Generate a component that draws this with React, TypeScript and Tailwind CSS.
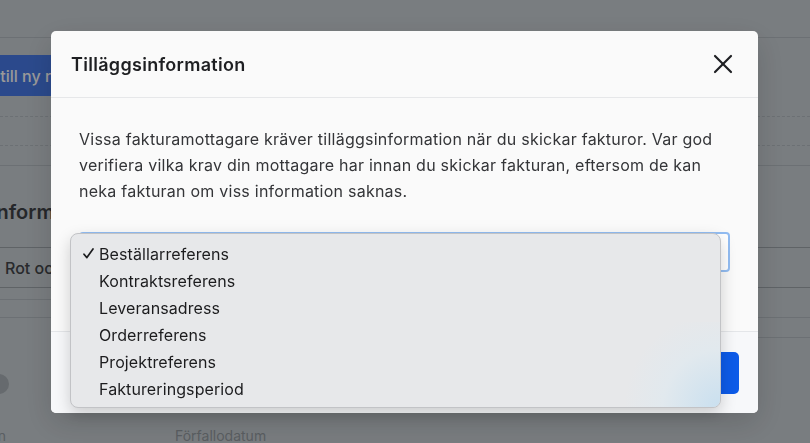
import { X } from 'lucide-react'

const options = [
  'Beställarreferens',
  'Kontraktsreferens',
  'Leveransadress',
  'Orderreferens',
  'Projektreferens',
  'Faktureringsperiod',
]

export default function App() {
  const selected = options[0]

  return (
    <div className="relative h-screen w-full overflow-hidden bg-[#cad0d5] font-['Inter',sans-serif]">
      {/* page behind the dialog */}
      <div className="h-[38px] border-b border-[#b4bbc1]" />
      <div className="pt-[17px]">
        <button className="ml-[-58px] h-[41px] whitespace-nowrap bg-[#487be9] px-4 text-[16px] font-medium text-white">
          Lägg till ny rad
        </button>
      </div>
      <div className="mt-[20px] h-[30px] border-t border-b border-dashed border-[#b4bbc1]" />
      <div className="h-[20px] border-b border-[#b4bbc1]" />
      <h2 className="ml-[-9px] mt-[34px] whitespace-nowrap text-[20px] font-semibold leading-[24px] text-[#3f4247]">
        Information
      </h2>
      <div className="mt-[23px] flex h-[41px] items-center border-y border-[#9ea5ab] pl-[5px] text-[16px] text-[#43464b]">
        <span className="font-medium">Rot och rut</span>
      </div>
      <div className="mt-[11px] h-px w-[60px] bg-[#b4bbc1]" />
      <div className="mt-[17px] h-px w-full bg-[#b4bbc1]" />
      <div className="ml-auto mt-[19px] h-px w-[60px] bg-[#b4bbc1]" />
      <div className="ml-[-11px] mt-[36px] h-5 w-5 rounded-full bg-[#aab1b7]" />
      <div className="mt-[32px] flex items-center text-[14px] leading-[20px] text-[#969da3]">
        <div className="flex w-[6px] justify-end overflow-hidden whitespace-nowrap">Referensperson</div>
        <div className="ml-[169px]">Förfallodatum</div>
      </div>

      {/* dialog */}
      <div className="fixed inset-0 bg-black/40">
        <div className="ml-[51px] mt-[31px] w-[707px] rounded-[5px] bg-[#fafafa] shadow-[0_10px_30px_rgba(0,0,0,0.15)]">
          <div className="flex h-[67px] items-center justify-between border-b border-[#e6e7e9] pl-5 pr-[19px]">
            <h1 className="text-[18px] font-semibold tracking-[0.3px] text-[#1e1f22]">Tilläggsinformation</h1>
            <button className="text-[#1e1f22]">
              <X size={32} strokeWidth={1.6} />
            </button>
          </div>

          <div className="h-[233px] px-7 pt-[28px]">
            <p className="text-[16px] leading-[26px] tracking-[0.24px] text-[#343538]">
              Vissa fakturamottagare kräver tilläggsinformation när du skickar fakturor. Var god verifiera vilka krav din
              mottagare har innan du skickar fakturan, eftersom de kan neka fakturan om viss information saknas.
            </p>
            <div className="relative mt-[28px] h-[40px] rounded-[4px] border-2 border-[#93bdf2] bg-white">
              <div className="absolute left-[-11px] top-[-1px] z-10 h-[175px] w-[651px] overflow-hidden rounded-[8px] border border-[#c2c3c6] bg-[#e7e8ea] py-[6px] shadow-[0_6px_16px_rgba(0,0,0,0.18)]">
                {options.map((o) => (
                  <div key={o} className="flex h-[27px] items-center pl-3 text-[16px] tracking-[0.1px] text-[#1c1c1e]">
                    <span className="flex w-4 items-center">
                      {o === selected && (
                        <svg width="11" height="11" viewBox="0 0 11 11" fill="none">
                          <path d="M1 6.2 L3.9 9.6 L10 1" stroke="#1c1c1e" strokeWidth="1.7" strokeLinecap="round" strokeLinejoin="round" />
                        </svg>
                      )}
                    </span>
                    <span>{o}</span>
                  </div>
                ))}
                <div className="pointer-events-none absolute bottom-0 right-0 h-[85px] w-[95px] bg-[radial-gradient(circle_at_100%_100%,rgba(196,222,240,0.85),rgba(220,234,242,0.5)_45%,rgba(231,232,234,0)_75%)]" />
              </div>
            </div>
          </div>

          <div className="flex h-[82px] items-center justify-end rounded-b-[5px] border-t border-[#e4e6e9] bg-[#f7f8fa] pr-[19px]">
            <button className="h-[42px] rounded-[5px] bg-[#0d5be8] px-6 text-[16px] font-medium text-white">
              Spara
            </button>
          </div>
        </div>
      </div>
    </div>
  )
}
